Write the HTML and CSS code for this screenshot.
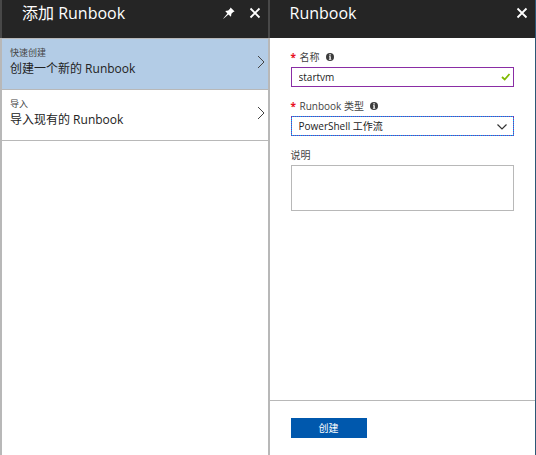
FILE: index.html
```html
<!DOCTYPE html>
<html lang="zh-CN">
<head>
<meta charset="utf-8">
<meta name="viewport" content="width=device-width, initial-scale=1">
<title>添加 Runbook</title>
<link rel="stylesheet" href="styles.css">
</head>
<body>
<main class="blades">
  <section class="blade blade-list">
    <header class="blade-header">
      <h1 class="blade-title">添加 Runbook</h1>
      <button class="icon-button" type="button" aria-label="固定">
        <svg width="12" height="12" viewBox="0 0 12 12"><path d="M7.600 0.400 11.600 4.400 10.200 5 8.400 6.800 8 9.800 5.400 7.600 0.500 11.700 0.300 11.500 4.400 6.600 2.200 4 5.200 3.600 7 1.800Z" fill="#fff"/></svg>
      </button>
      <button class="icon-button" type="button" aria-label="关闭">
        <svg width="12" height="12" viewBox="0 0 12 12"><path d="M1.500 1.500 10.500 10.500M10.500 1.500 1.500 10.500" stroke="#fff" stroke-width="1.800" fill="none"/></svg>
      </button>
    </header>
    <nav class="options">
      <a class="option option-selected" href="#create">
        <span class="option-text"><span class="option-kind">快速创建</span><span class="option-name">创建一个新的 Runbook</span></span>
        <svg width="8" height="14" viewBox="0 0 8 14"><path d="M1 1 7 7 1 13" stroke="#444" fill="none"/></svg>
      </a>
      <a class="option" href="#import">
        <span class="option-text"><span class="option-kind">导入</span><span class="option-name">导入现有的 Runbook</span></span>
        <svg width="8" height="14" viewBox="0 0 8 14"><path d="M1 1 7 7 1 13" stroke="#444" fill="none"/></svg>
      </a>
    </nav>
  </section>
  <section class="blade blade-form">
    <header class="blade-header">
      <h2 class="blade-title">Runbook</h2>
      <button class="icon-button" type="button" aria-label="关闭">
        <svg width="12" height="12" viewBox="0 0 12 12"><path d="M1.500 1.500 10.500 10.500M10.500 1.500 1.500 10.500" stroke="#fff" stroke-width="1.800" fill="none"/></svg>
      </button>
    </header>
    <form class="form">
      <div class="fields">
        <div class="field">
          <label class="label" for="name"><span class="required">*</span>名称
            <svg class="info" width="8" height="8" viewBox="0 0 8 8"><circle cx="4" cy="4" r="4" fill="#3c3c3c"/><path d="M3.300 1.200H4.800V2.400H3.300ZM3 3.200H4.800V6H5.300V6.800H2.900V6H3.400V4H3Z" fill="#fff"/></svg>
          </label>
          <div class="control">
            <input class="box box-valid" id="name" type="text" value="startvm">
            <svg class="mark" width="10" height="8" viewBox="0 0 10 8"><path d="M1 4 3.700 6.500 8.500 1" stroke="#7fba00" stroke-width="1.800" fill="none"/></svg>
          </div>
        </div>
        <div class="field">
          <label class="label" for="type"><span class="required">*</span>Runbook 类型
            <svg class="info" width="8" height="8" viewBox="0 0 8 8"><circle cx="4" cy="4" r="4" fill="#3c3c3c"/><path d="M3.300 1.200H4.800V2.400H3.300ZM3 3.200H4.800V6H5.300V6.800H2.900V6H3.400V4H3Z" fill="#fff"/></svg>
          </label>
          <div class="control">
            <select class="box box-focus" id="type"><option>PowerShell 工作流</option></select>
            <svg class="mark mark-arrow" width="10" height="6" viewBox="0 0 10 6"><path d="M0.500 0.500 5 5 9.500 0.500" stroke="#333" stroke-width="1.200" fill="none"/></svg>
          </div>
        </div>
        <div class="field">
          <label class="label" for="description">说明</label>
          <textarea class="box box-area" id="description"></textarea>
        </div>
      </div>
      <footer class="form-footer">
        <button class="create" type="submit">创建</button>
      </footer>
    </form>
  </section>
</main>
</body>
</html>
```
FILE: styles.css
```css
* {
  box-sizing: border-box;
}

body {
  margin: 0;
  background: #fff;
  color: #222;
  font-family: "Open Sans", "Noto Sans CJK SC", sans-serif;
  font-size: 10px;
  line-height: 14px;
}

.blades {
  display: grid;
  grid-template-columns: 1fr 1fr;
  min-height: 100vh;
  border-right: 1px solid #2b5876;
}

.blade {
  display: flex;
  flex-direction: column;
  border-left: 2px solid #b8b8b8;
}

.blade-header {
  display: flex;
  align-items: flex-start;
  gap: 14px;
  height: 38px;
  margin-left: -2px;
  padding: 3px 7px 0 20px;
  border-left: 2px solid #484848;
  background: #252525;
}

.blade-title {
  flex: 1;
  margin: 0;
  color: #fff;
  font-size: 16px;
  font-weight: 400;
  line-height: 20px;
}

.icon-button {
  padding: 4px 0;
  border: 0;
  background: none;
}

.icon-button svg {
  display: block;
}

.options {
  border-top: 1px solid #b8b8b8;
}

.option {
  display: flex;
  align-items: center;
  justify-content: space-between;
  padding: 7px 3px 11px 8px;
  border-bottom: 1px solid #b8b8b8;
  color: #222;
  text-decoration: none;
}

.option-selected {
  background: #b3cce6;
}

.option-text {
  display: flex;
  flex-direction: column;
}

.option-kind {
  color: #444;
  font-size: 9px;
}

.option-name {
  font-size: 12px;
  line-height: 18px;
}

.form {
  display: flex;
  flex: 1;
  flex-direction: column;
}

.fields {
  display: flex;
  flex: 1;
  flex-direction: column;
  gap: 12px;
  padding: 12px 21px;
}

.field {
  display: flex;
  flex-direction: column;
  gap: 3px;
}

.label {
  display: flex;
  align-items: center;
  color: #444;
}

.required {
  width: 9px;
  color: #e81123;
  font-weight: 700;
}

.info {
  margin-left: 6px;
}

.control {
  position: relative;
}

.box {
  display: block;
  width: 100%;
  height: 20px;
  margin: 0;
  padding: 0 7px;
  border: 1px solid #b8b8b8;
  border-radius: 0;
  outline: 0;
  background: #fff;
  color: #222;
  font: inherit;
  appearance: none;
}

.box-valid {
  border-color: #8a2da5;
}

.box-focus {
  border: 1px dotted #8a2da5;
  background: linear-gradient(#fff, #fff) padding-box, #00b4ff border-box;
}

.box-area {
  height: 46px;
  resize: none;
}

.mark {
  position: absolute;
  top: 6px;
  right: 3px;
  pointer-events: none;
}

.mark-arrow {
  top: 8px;
  right: 7px;
}

.form-footer {
  padding: 17px 21px;
  border-top: 1px solid #b8b8b8;
}

.create {
  display: block;
  width: 76px;
  height: 20px;
  padding: 0;
  border: 0;
  background: #0058ad;
  color: #fff;
  font: inherit;
}
```
